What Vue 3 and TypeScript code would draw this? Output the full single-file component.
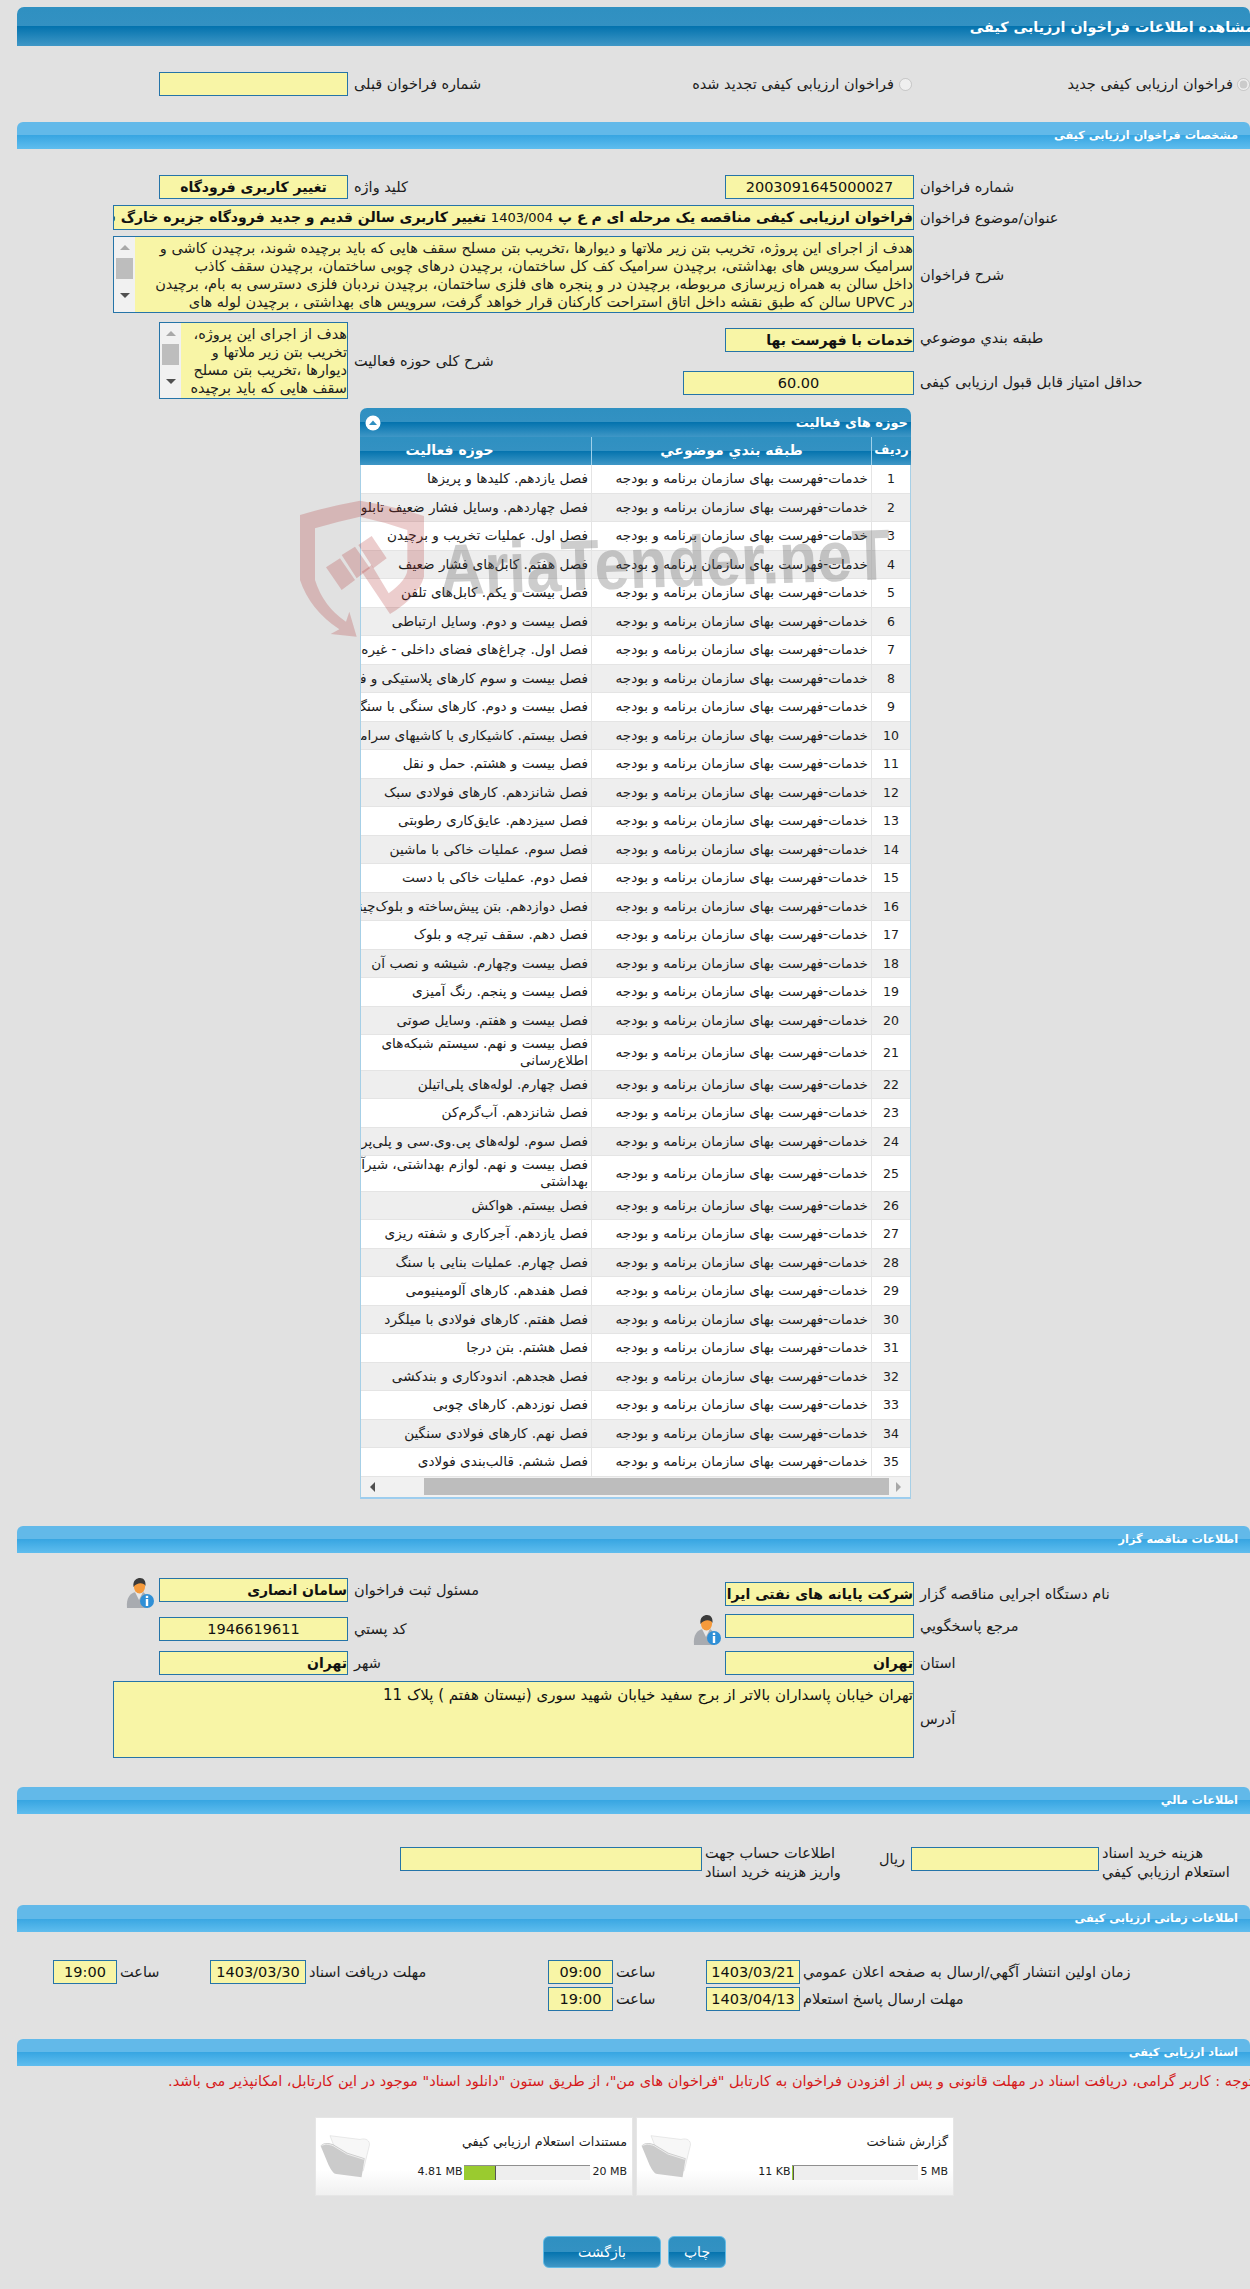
<script setup lang="ts">
const topics: string[] = [
  'فصل یازدهم. کلیدها و پریزها',
  'فصل چهاردهم. وسایل فشار ضعیف تابلوها',
  'فصل اول. عملیات تخریب و برچیدن',
  'فصل هفتم. کابل‌های فشار ضعیف',
  'فصل بیست و یکم. کابل‌های تلفن',
  'فصل بیست و دوم. وسایل ارتباطی',
  'فصل اول. چراغ‌های فضای داخلی - غیره',
  'فصل بیست و سوم کارهای پلاستیکی و فایبرگلاس',
  'فصل بیست و دوم. کارهای سنگی با سنگ پلاک',
  'فصل بیستم. کاشیکاری با کاشیهای سرامیکی',
  'فصل بیست و هشتم. حمل و نقل',
  'فصل شانزدهم. کارهای فولادی سبک',
  'فصل سیزدهم. عایق‌کاری رطوبتی',
  'فصل سوم. عملیات خاکی با ماشین',
  'فصل دوم. عملیات خاکی با دست',
  'فصل دوازدهم. بتن پیش‌ساخته و بلوک‌چینی',
  'فصل دهم. سقف تیرچه و بلوک',
  'فصل بیست وچهارم. شیشه و نصب آن',
  'فصل بیست و پنجم. رنگ آمیزی',
  'فصل بیست و هفتم. وسایل صوتی',
  'فصل بیست و نهم. سیستم شبکه‌های\nاطلاع‌رسانی',
  'فصل چهارم. لوله‌های پلی‌اتیلن',
  'فصل شانزدهم. آب‌گرم‌کن',
  'فصل سوم. لوله‌های پی.وی.سی و پلی‌پروپیلن',
  'فصل بیست و نهم. لوازم بهداشتی، شیرآلات\nبهداشتی',
  'فصل بیستم. هواکش',
  'فصل یازدهم. آجرکاری و شفته ریزی',
  'فصل چهارم. عملیات بنایی با سنگ',
  'فصل هفدهم. کارهای آلومینیومی',
  'فصل هفتم. کارهای فولادی با میلگرد',
  'فصل هشتم. بتن درجا',
  'فصل هجدهم. اندودکاری و بندکشی',
  'فصل نوزدهم. کارهای چوبی',
  'فصل نهم. کارهای فولادی سنگین',
  'فصل ششم. قالب‌بندی فولادی',
]
const tallRows = new Set([20, 24])
const category = 'خدمات-فهرست بهای سازمان برنامه و بودجه'
const longText = 'هدف از اجرای این پروژه، تخریب بتن زیر ملاتها و دیوارها ،تخریب بتن مسلح سقف هایی که باید برچیده شوند، برچیدن کاشی و سرامیک سرویس های بهداشتی، برچیدن سرامیک کف کل ساختمان، برچیدن درهای چوبی ساختمان، برچیدن سقف کاذب داخل سالن به همراه زیرسازی مربوطه، برچیدن در و پنجره های فلزی ساختمان، برچیدن نردبان فلزی دسترسی به بام، برچیدن در UPVC سالن که طبق نقشه داخل اتاق استراحت کارکنان قرار خواهد گرفت، سرویس های بهداشتی ، برچیدن لوله های تاسیسات'
const wideLines = [
  'هدف از اجرای این پروژه، تخریب بتن زیر ملاتها و دیوارها ،تخریب بتن مسلح سقف هایی که باید برچیده شوند، برچیدن کاشی و',
  'سرامیک سرویس های بهداشتی، برچیدن سرامیک کف کل ساختمان، برچیدن درهای چوبی ساختمان، برچیدن سقف کاذب',
  'داخل سالن به همراه زیرسازی مربوطه، برچیدن در و پنجره های فلزی ساختمان، برچیدن نردبان فلزی دسترسی به بام، برچیدن',
  'در UPVC سالن که طبق نقشه داخل اتاق استراحت کارکنان قرار خواهد گرفت، سرویس های بهداشتی ، برچیدن لوله های',
]
</script>

<template>
  <div class="page" dir="rtl">
    <div class="main-bar"><span class="main-title">مشاهده اطلاعات فراخوان ارزیابی کیفی</span></div>

    <div class="grid radio-row">
      <label class="radio-cell"><input type="radio" disabled checked class="radio" /><span>فراخوان ارزیابی کیفی جدید</span></label>
      <label class="radio-cell second"><input type="radio" disabled class="radio" /><span>فراخوان ارزیابی کیفی تجدید شده</span></label>
      <div class="lab lab2">شماره فراخوان قبلی</div>
      <div class="in col4"></div>
    </div>

    <div class="sec-bar s1">مشخصات فراخوان ارزیابی کیفی</div>

    <div class="grid row-a">
      <div class="lab">شماره فراخوان</div>
      <div class="in num">2003091645000027</div>
      <div class="lab lab2">کلید واژه</div>
      <div class="in col4 bold center">تغییر کاربری فرودگاه</div>
    </div>
    <div class="grid row-b">
      <div class="lab">عنوان/موضوع فراخوان</div>
      <div class="in wide bold tall-25">فراخوان ارزیابی کیفی مناقصه یک مرحله ای م ع پ <span class="plain">1403/004</span> تغییر کاربری سالن قدیم و جدید فرودگاه جزیره خارگ شرکت پایانه های نفتی ایران</div>
    </div>
    <div class="grid row-b">
      <div class="lab">شرح فراخوان</div>
      <div class="area wide">
        <div class="area-text"><div v-for="(line, i) in wideLines" :key="i" class="area-line">{{ line }}</div></div>
        <div class="vscroll"><i class="up"></i><b></b><i class="down"></i></div>
      </div>
    </div>

    <div class="grid twin">
      <div class="lab t1">طبقه بندي موضوعي</div>
      <div class="in bold t1 cat">خدمات با فهرست بها</div>
      <div class="lab lab2 t3">شرح کلی حوزه فعالیت</div>
      <div class="area col4 t4">
        <div class="area-text">{{ longText }}</div>
        <div class="vscroll"><i class="up"></i><b></b><i class="down"></i></div>
      </div>
      <div class="lab t2">حداقل امتیاز قابل قبول ارزیابی کیفی</div>
      <div class="in num t2 score">60.00</div>
    </div>

    <div class="panel">
      <div class="panel-head">
        <span>حوزه های فعالیت</span>
        <svg class="collapse" viewBox="0 0 16 16" aria-hidden="true"><circle cx="8" cy="8" r="7.5" fill="#fff" /><path d="M4 10 8 5.6 12 10Z" fill="#2f8fc0" /></svg>
      </div>
      <div class="tr th">
        <div>ردیف</div>
        <div>طبقه بندي موضوعي</div>
        <div class="th-last">حوزه فعاليت</div>
      </div>
      <div v-for="(t, i) in topics" :key="i" class="tr" :class="{ even: i % 2 === 1, tall: tallRows.has(i) }">
        <div class="c1">{{ i + 1 }}</div>
        <div class="c2">{{ category }}</div>
        <div class="c3" :class="{ wrap: tallRows.has(i) }">{{ t }}</div>
      </div>
      <div class="hscroll" dir="ltr"><i class="left"></i><b></b><i class="right"></i></div>
      <div class="mark" dir="ltr" aria-hidden="true">
        <svg class="shield" viewBox="0 0 420 480">
          <g fill="#b03030" fill-opacity=".24">
            <path d="M30 105Q120 78 210 62 310 78 402 108V290Q385 350 300 402L215 275 245 255 296 340Q350 300 352 270V150Q280 125 210 110 140 125 75 145V300Q100 380 168 425L178 395 200 470 122 462 148 448Q60 390 30 300Z" />
            <path d="M108 262 150 235 195 300 155 330ZM155 225 195 200 240 265 200 295ZM205 195 245 168 290 235 250 265Z" />
          </g>
        </svg>
        <span class="mark-text">AriaTender.neT</span>
      </div>
    </div>

    <div class="sec-bar s2">اطلاعات مناقصه گزار</div>
    <div class="grid org">
      <div class="lab o1">نام دستگاه اجرایی مناقصه گزار</div>
      <div class="in bold o1 clip">شرکت پایانه های نفتی ایران</div>
      <div class="lab lab2">مسئول ثبت فراخوان</div>
      <div class="in col4 bold">سامان انصاری</div>
      <svg class="person col5" viewBox="0 0 30 30" aria-hidden="true">
        <path d="M2 30C1 20 5 15 11 14H18C21 16 23 19 23 24V30Z" fill="#a8abb0" />
        <path d="M10 14 14 22 18 14Z" fill="#e8e8e8" />
        <ellipse cx="14.5" cy="8.5" rx="5.6" ry="7" fill="#f59a3c" />
        <path d="M8.5 9C7.5 2 12 0 15 0 19 0 21 3 20.5 8 19 4.500 12 4 8.500 9Z" fill="#3b3b3b" />
        <circle cx="22" cy="23" r="7" fill="#2f8fd6" /><rect x="20.800" y="21" width="2.400" height="7" fill="#fff" /><rect x="20.800" y="17.800" width="2.400" height="2.200" fill="#fff" />
      </svg>
    </div>
    <div class="grid org o-h2">
      <div class="lab">مرجع پاسخگويي</div>
      <div class="in"></div>
      <div class="lab lab2 o2">کد پستي</div>
      <div class="in col4 num o2">1946619611</div>
      <svg class="person p2" viewBox="0 0 30 30" aria-hidden="true">
        <path d="M2 30C1 20 5 15 11 14H18C21 16 23 19 23 24V30Z" fill="#a8abb0" />
        <path d="M10 14 14 22 18 14Z" fill="#e8e8e8" />
        <ellipse cx="14.5" cy="8.5" rx="5.6" ry="7" fill="#f59a3c" />
        <path d="M8.5 9C7.5 2 12 0 15 0 19 0 21 3 20.5 8 19 4.500 12 4 8.500 9Z" fill="#3b3b3b" />
        <circle cx="22" cy="23" r="7" fill="#2f8fd6" /><rect x="20.800" y="21" width="2.400" height="7" fill="#fff" /><rect x="20.800" y="17.800" width="2.400" height="2.200" fill="#fff" />
      </svg>
    </div>
    <div class="grid org o-h3">
      <div class="lab">استان</div>
      <div class="in bold">تهران</div>
      <div class="lab lab2">شهر</div>
      <div class="in col4 bold">تهران</div>
    </div>
    <div class="grid org o-h4">
      <div class="lab">آدرس</div>
      <div class="in wide addr">تهران خیابان پاسداران بالاتر از برج سفید خیابان شهید سوری (نیستان هفتم ) پلاک 11</div>
    </div>

    <div class="sec-bar s3">اطلاعات مالي</div>
    <div class="money">
      <div class="stack l1">هزینه خرید اسناد<br />استعلام ارزیابي کیفي</div>
      <div class="in m1"></div>
      <div class="rial">ریال</div>
      <div class="stack l2">اطلاعات حساب جهت<br />واریز هزینه خرید اسناد</div>
      <div class="in m2"></div>
    </div>

    <div class="sec-bar s4">اطلاعات زمانی ارزیابی کیفی</div>
    <div class="times">
      <div class="lab">زمان اولین انتشار آگهي/ارسال به صفحه اعلان عمومي</div>
      <div class="in num">1403/03/21</div>
      <div></div>
      <div class="lab hour">ساعت</div>
      <div class="in num">09:00</div>
      <div></div>
      <div class="lab">مهلت دریافت اسناد</div>
      <div class="in num">1403/03/30</div>
      <div></div>
      <div class="lab hour">ساعت</div>
      <div class="in num">19:00</div>

      <div class="lab">مهلت ارسال پاسخ استعلام</div>
      <div class="in num">1403/04/13</div>
      <div></div>
      <div class="lab hour">ساعت</div>
      <div class="in num">19:00</div>
    </div>

    <div class="sec-bar s5">اسناد ارزیابی کیفی</div>
    <div class="notice">توجه : کاربر گرامی، دریافت اسناد در مهلت قانونی و پس از افزودن فراخوان به کارتابل "فراخوان های من"، از طریق ستون "دانلود اسناد" موجود در این کارتابل، امکانپذیر می باشد.</div>

    <div class="cards">
      <div class="card">
        <div class="card-body">
          <div class="card-title">گزارش شناخت</div>
          <div class="meter" dir="ltr">
            <span>11 KB</span>
            <div class="track"><div class="fill" style="width: 1%"></div></div>
            <span>5 MB</span>
          </div>
        </div>
        <svg class="folder" viewBox="0 0 165 145" aria-hidden="true">
          <path d="M35 8 130 20C150 14 162 25 160 38L140 120 70 100Z" fill="#f7f7f7" stroke="#dcdcdc" stroke-width="2" />
          <path d="M5 40C12 30 25 28 45 35L90 62 145 80 135 140 55 130C45 128 38 115 30 100Z" fill="#cbcbcb" />
          <path d="M8 40C18 33 30 34 45 40L88 66 142 83" fill="none" stroke="#efefef" stroke-width="3" />
        </svg>
      </div>
      <div class="card">
        <div class="card-body">
          <div class="card-title">مستندات استعلام ارزیابي کیفي</div>
          <div class="meter" dir="ltr">
            <span>4.81 MB</span>
            <div class="track"><div class="fill" style="width: 25%"></div></div>
            <span>20 MB</span>
          </div>
        </div>
        <svg class="folder" viewBox="0 0 165 145" aria-hidden="true">
          <path d="M35 8 130 20C150 14 162 25 160 38L140 120 70 100Z" fill="#f7f7f7" stroke="#dcdcdc" stroke-width="2" />
          <path d="M5 40C12 30 25 28 45 35L90 62 145 80 135 140 55 130C45 128 38 115 30 100Z" fill="#cbcbcb" />
          <path d="M8 40C18 33 30 34 45 40L88 66 142 83" fill="none" stroke="#efefef" stroke-width="3" />
        </svg>
      </div>
    </div>

    <div class="buttons">
      <button class="btn print" type="button">چاپ</button>
      <button class="btn back" type="button">بازگشت</button>
    </div>
  </div>
</template>

<style scoped>
.page {
  position: relative;
  box-sizing: border-box;
  width: 1250px;
  height: 2289px;
  padding: 7px 0 0 17px;
  overflow: hidden;
  background: #e1e1e1;
  color: #1c1c1c;
  font-family: "DejaVu Sans", sans-serif;
  font-size: 14.5px;
  line-height: 18px;
}
.main-bar {
  height: 39px;
  display: flex;
  align-items: center;
  overflow: hidden;
  border-radius: 7px 7px 0 0;
  background: linear-gradient(#2f90c1 0, #3391c2 50%, #0473ae 50%, #3f97c6 100%);
}
.main-title {
  margin-right: -4px;
  color: #fff;
  font-size: 14.3px;
  font-weight: bold;
  white-space: nowrap;
}
.sec-bar {
  box-sizing: border-box;
  height: 27px;
  padding: 3px 12px 0 0;
  border-radius: 6px 6px 0 0;
  background: linear-gradient(#62b9e9 0, #62b9e9 50%, #38a6e2 50%, #5fbdee 100%);
  color: #fff;
  font-size: 11.3px;
  font-weight: bold;
  line-height: 21px;
}
.s1 { margin-top: 26px; }
.s2 { margin-top: 27px; }
.s3 { margin-top: 29px; }
.s4 { margin-top: 21px; }
.s5 { margin-top: 28px; }

.grid {
  display: grid;
  grid-template-columns: 336px 189px 377px 189px 142px;
}
.radio-row { margin-top: 26px; grid-template-rows: 24px; align-items: center; height: 24px; }
.radio-row > * { grid-row: 1; }
.radio-cell { display: flex; align-items: center; gap: 4px; height: 24px; white-space: nowrap; }
.radio-cell.second { grid-column: 2 / span 2; padding-right: 2px; gap: 5px; }
.radio { width: 13px; height: 13px; margin: 0; flex: none; }
.lab { padding-left: 6px; text-align: left; white-space: nowrap; align-self: center; }
.lab2 { grid-column: 3; }
.col4 { grid-column: 4; }
.col5 { grid-column: 5; }
.in {
  box-sizing: border-box;
  height: 24px;
  overflow: hidden;
  border: 1px solid #2574a8;
  background: #f8f5a6;
  color: #111;
  line-height: 22px;
  white-space: nowrap;
}
.bold { font-weight: bold; font-size: 14px; }
.center, .num { text-align: center; }
.plain { font-weight: normal; font-size: 13px; }
.wide { grid-column: 2 / span 4; margin-left: 96px; }
.row-a { margin-top: 26px; }
.row-b { margin-top: 6px; }
.tall-25 { height: 25px; }
.area {
  box-sizing: border-box;
  display: flex;
  height: 77px;
  overflow: hidden;
  border: 1px solid #2574a8;
  background: #f8f5a6;
}
.area-text { flex: 1; min-width: 0; overflow: hidden; padding-top: 2px; }
.area-line { white-space: nowrap; }
.vscroll {
  flex: none;
  display: flex;
  flex-direction: column;
  align-items: center;
  width: 21px;
  background: #f1f1f1;
  padding-top: 8px;
}
.vscroll b { width: 17px; height: 21px; margin-top: 8px; background: #bdbdbd; }
.vscroll i { width: 0; height: 0; border-left: 5px solid transparent; border-right: 5px solid transparent; }
.vscroll .up { border-bottom: 5px solid #a8a8a8; }
.vscroll .down { margin-top: 14px; border-top: 5px solid #505050; }

.twin { margin-top: 9px; grid-template-rows: 43px 34px; height: 77px; }
.t3 { grid-row: 1 / span 2; }
.t4 { grid-row: 1 / span 2; }
.t1.lab { margin-top: 7px; }
.t1 { grid-row: 1; grid-column: 1; align-self: start; }
.cat { grid-column: 2; margin-top: 6px; }
.t2 { grid-row: 2; align-self: start; }
.t2.lab { grid-column: 1; margin-top: 8px; }
.score { grid-column: 2 / span 2; width: 231px; margin-top: 6px; }

.panel {
  position: relative;
  box-sizing: border-box;
  width: 551px;
  margin: 9px 339px 0 0;
  border-radius: 7px 7px 0 0;
  border-left: 1px solid #a6cfe6;
  border-right: 1px solid #a6cfe6;
  border-bottom: 2px solid #9dcdee;
  background: #fff;
}
.panel-head {
  display: flex;
  justify-content: space-between;
  align-items: center;
  box-sizing: border-box;
  height: 29px;
  padding: 0 3px 0 5px;
  margin: 0 -1px;
  border-radius: 7px 7px 0 0;
  background: linear-gradient(#2f90c1 0, #3391c2 50%, #0473ae 50%, #3f97c6 100%);
  color: #fff;
  font-size: 13px;
  font-weight: bold;
}
.collapse { width: 16px; height: 16px; }
.tr {
  display: grid;
  grid-template-columns: 38px 280px 232px;
  box-sizing: border-box;
  height: 28.5px;
  overflow: hidden;
  border-bottom: 1.5px solid #e4e4e4;
  white-space: nowrap;
  background: #fff;
  font-size: 13.6px;
}
.tr.even { background: #eeeeee; }
.tr.tall { height: 35.5px; }
.tr > div { overflow: hidden; padding: 0 3px; line-height: 27px; }
.tr > div + div { border-right: 1px solid #e4e4e4; }
.tall > div { display: flex; align-items: center; }
.tr > .c1 { text-align: center; justify-content: center; font-size: 12.5px; }
.tr > .c3 { padding-left: 0; }
.tr > .wrap { white-space: pre; line-height: 17px; }
.th {
  height: 28px;
  border: 0;
  margin: 0 -1px;
  grid-template-columns: 39px 280px 232px;
  background: linear-gradient(#2f90c1 0, #3391c2 50%, #0473ae 50%, #3f97c6 100%);
  color: #fff;
  font-size: 14px;
  font-weight: bold;
  text-align: center;
}
.tr.th > div { padding: 0; line-height: 26px; }
.tr.th > div:first-child { font-size: 13px; }
.tr.th > div + div { border-right: 1px solid #9fd0ea; }
.tr.th > .th-last { padding-right: 52px; }
.hscroll {
  display: flex;
  align-items: center;
  box-sizing: border-box;
  height: 20px;
  padding: 0 9px;
  background: #f1f1f1;
}
.hscroll b { width: 466px; height: 17px; margin-left: 49px; background: #bdbdbd; }
.hscroll i { width: 0; height: 0; border-top: 5px solid transparent; border-bottom: 5px solid transparent; }
.hscroll .left { border-right: 5px solid #505050; }
.hscroll .right { margin-left: 7px; border-left: 5px solid #a8a8a8; }

.mark { position: absolute; left: -71px; top: 72px; width: 620px; height: 160px; pointer-events: none; }
.shield { position: absolute; left: 0; top: 0; width: 140px; height: 160px; }
.mark-text {
  position: absolute;
  left: 150px;
  top: 54px;
  font-family: "Liberation Sans", sans-serif;
  font-size: 72px;
  font-weight: bold;
  line-height: 72px;
  color: rgba(90, 90, 90, 0.3);
  transform: rotate(-2deg) scaleX(0.87);
  transform-origin: 0 61px;
  white-space: nowrap;
}

.org { height: 36px; margin-top: 25px; }
.org .o1 { margin-top: 4px; }
.org > .lab { align-self: start; padding-top: 3px; }
.org .lab.o1 { margin-top: 4px; }
.person { width: 30px; height: 30px; margin-right: 4px; }
.o-h2 { height: 37px; margin-top: 0; }
.o-h2 .o2 { margin-top: 3px; }
.p2 { grid-column: 3; grid-row: 1; margin: 1px 3px 0 0; }
.o-h2 > .lab2 { grid-row: 1; }
.o-h3 { height: 30px; margin-top: 0; }
.o-h4 { height: 77px; margin-top: 0; }
.o-h4 > .lab { align-self: center; padding-top: 0; }
.addr { height: 77px; white-space: normal; line-height: 18px; padding-top: 4px; font-size: 15px; }

.money { display: flex; height: 40px; margin-top: 30px; padding-right: 12px; }
.stack { flex: none; line-height: 19px; text-align: left; white-space: nowrap; }
.l1 { width: 136px; margin-left: 3px; }
.l2 { width: 137px; margin-left: 3px; }
.m1, .m2 { flex: none; margin-top: 3px; }
.m1 { width: 188px; }
.m2 { width: 302px; }
.rial { flex: none; width: 24px; margin: 6px 6px 0 39px; text-align: center; }

.times {
  display: grid;
  grid-template-columns: 339px 94px 49px 44px 65px 120px 122px 96px 49px 44px 64px;
  grid-auto-rows: 24px;
  row-gap: 3px;
  margin-top: 28px;
  padding-right: 111px;
}
.times .lab { padding-left: 3px; }
.times .in { padding: 0; }
.hour { padding-left: 2px; }

.notice { margin: 6px -3px 0 0; color: #d61a1a; white-space: nowrap; }
.cards { display: flex; gap: 3px; margin-top: 27px; padding-right: 296px; }
.card {
  box-sizing: border-box;
  display: flex;
  width: 318px;
  height: 79px;
  padding-right: 5px;
  border: 1px solid #e6e6e6;
  background: linear-gradient(#fff 0, #fff 68%, #f0f0f0 100%);
}
.card-body { width: 249px; flex: none; }
.card-title { margin-top: 15px; white-space: nowrap; font-size: 12.8px; }
.meter { display: flex; align-items: center; justify-content: flex-end; gap: 2px; margin-top: 14px; height: 15px; white-space: nowrap; font-size: 11px; margin-left: 5px; }
.track { box-sizing: border-box; width: 126px; height: 15px; border-top: 1px solid #8f8f8f; background: #eee; }
.fill { box-sizing: border-box; height: 14px; background: #9acb2f; border-right: 1px solid #555; }
.folder { width: 52px; height: 46px; margin: 15px 7px 0 0; }
.buttons { display: flex; gap: 7px; margin-top: 40px; padding-right: 524px; }
.btn {
  box-sizing: border-box;
  height: 32px;
  padding: 0;
  border: 1px solid #62bbe6;
  border-radius: 6px;
  background: linear-gradient(#2f90c1 0, #3391c2 50%, #0473ae 50%, #3f97c6 100%);
  color: #fff;
  font: 14px "DejaVu Sans", sans-serif;
}
.print { width: 58px; }
.back { width: 118px; }
</style>
